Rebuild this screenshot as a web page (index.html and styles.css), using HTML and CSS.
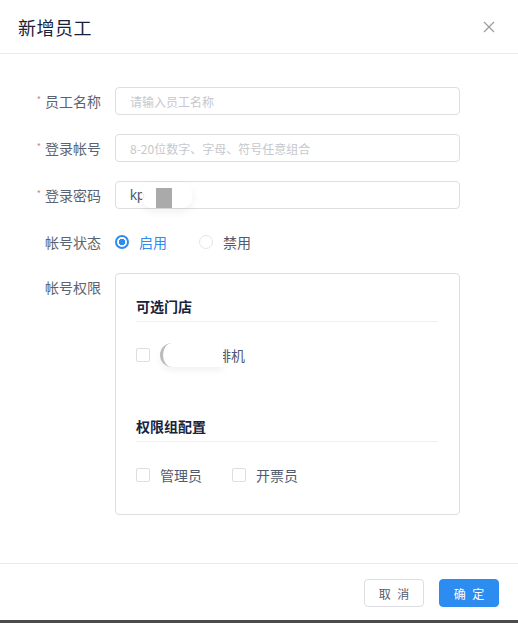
FILE: index.html
```html
<!DOCTYPE html>
<html lang="zh-CN">
<head>
    <meta charset="UTF-8">
    <meta name="viewport" content="width=device-width, initial-scale=1.0">
    <title>新增员工</title>
    <link rel="stylesheet" href="styles.css">
</head>
<body>

<div class="modal">
    <div class="modal-header">
        <span class="modal-title">新增员工</span>
        <svg class="modal-close" width="12" height="12" viewBox="0 0 12 12">
            <path d="M1 1L11 11M11 1L1 11" stroke="#999" stroke-width="1.1" fill="none"/>
        </svg>
    </div>

    <div class="modal-body">
        <div class="form-item">
            <label class="form-label required">员工名称</label>
            <input class="form-input" type="text" placeholder="请输入员工名称">
        </div>
        <div class="form-item">
            <label class="form-label required">登录帐号</label>
            <input class="form-input" type="text" placeholder="8-20位数字、字母、符号任意组合">
        </div>
        <div class="form-item">
            <label class="form-label required">登录密码</label>
            <div class="form-input fake-input">kp<span class="redact-pass"><span class="redact-block"></span></span></div>
        </div>
        <div class="form-item form-item-radio">
            <label class="form-label">帐号状态</label>
            <div class="radio-group">
                <span class="radio checked"><span class="radio-dot"></span>启用</span>
                <span class="radio"><span class="radio-dot"></span>禁用</span>
            </div>
        </div>
        <div class="form-item">
            <label class="form-label">帐号权限</label>
            <div class="perm-box">
                <div class="perm-section">
                    <div class="perm-title">可选门店</div>
                    <div class="check-row">
                        <span class="check"><span class="check-box"></span><span class="redact-store"></span>排机</span>
                    </div>
                </div>
                <div class="perm-section">
                    <div class="perm-title">权限组配置</div>
                    <div class="check-row">
                        <span class="check"><span class="check-box"></span>管理员</span>
                        <span class="check"><span class="check-box"></span>开票员</span>
                    </div>
                </div>
            </div>
        </div>
    </div>

    <div class="modal-footer">
        <button class="btn">取 消</button>
        <button class="btn btn-primary">确 定</button>
    </div>
</div>

</body>
</html>
```

FILE: styles.css
```css
body { margin: 0; background: #fff; font-family: "Noto Sans CJK SC", "Liberation Sans", sans-serif; color: #515a6e; font-size: 14px; }
.modal { width: 518px; height: 620px; display: flex; flex-direction: column; border-bottom: 3px solid #4b4b4b; }

.modal-header { height: 53px; border-bottom: 1px solid #e8eaec; display: flex; align-items: center; justify-content: space-between; padding: 0 23px 0 18px; }
.modal-title { font-size: 18px; color: #17233d; letter-spacing: 0.5px; }
.modal-close { display: block; }

.modal-body { flex: 1; padding-top: 33px; }
.form-item { display: flex; align-items: flex-start; margin-bottom: 19px; }
.form-item-radio { margin-bottom: 17px; }
.form-label { width: 101px; height: 28px; padding-right: 14px; text-align: right; line-height: 28px; font-size: 14px; color: #5c6370; flex-shrink: 0; }
.required::before { content: "*"; color: #c98a84; font-size: 9px; margin-right: 4px; position: relative; top: -4px; }

.form-input { width: 345px; height: 28px; box-sizing: border-box; border: 1px solid #dcdee2; border-radius: 4px; padding: 0 14px; font-family: inherit; font-size: 12px; color: #515a6e; outline: none; }
.form-input::placeholder { color: #c5c8ce; }
.fake-input { display: flex; align-items: center; font-size: 14px; color: #515a6e; font-family: "Liberation Sans", sans-serif; }
.redact-pass { display: inline-block; width: 50px; height: 26px; margin-left: -3px; background: rgba(255,255,255,0.9); box-shadow: 0 4px 10px rgba(0,0,0,0.06); border-radius: 10px; position: relative; }
.redact-block { position: absolute; left: 14px; top: 6px; width: 16px; height: 20px; background: #aaa; }

.radio-group { display: flex; align-items: center; height: 28px; }
.radio { display: flex; align-items: center; margin-right: 32px; color: #515a6e; }
.radio-dot { width: 12px; height: 12px; border: 1px solid #e3e5e8; border-radius: 50%; margin-right: 10px; }
.radio.checked { color: #2d8cf0; }
.radio.checked .radio-dot { background: radial-gradient(circle, #2d8cf0 3px, #fff 3.5px); border: 2px solid #2d8cf0; width: 10px; height: 10px; }

.perm-box { width: 345px; height: 242px; box-sizing: border-box; border: 1px solid #dcdee2; border-radius: 4px; padding: 22px 21px 0 20px; }
.perm-section + .perm-section { margin-top: 51px; }
.perm-title { font-weight: bold; color: #17233d; font-size: 14px; line-height: 20px; padding-bottom: 5px; border-bottom: 1px solid #eef0f3; }
.check-row { display: flex; align-items: center; margin-top: 23px; height: 20px; }
.check { display: flex; align-items: center; margin-right: 30px; color: #515a6e; }
.check-box { width: 12px; height: 12px; border: 1px solid #dcdee2; border-radius: 2px; margin-right: 10px; }
.redact-store { display: inline-block; width: 60px; height: 24px; margin-right: -6px; border-left: 3px solid #bbb; border-radius: 12px 0 0 12px; background: #fff; box-shadow: 0 4px 6px rgba(0,0,0,0.05); position: relative; }

.modal-footer { height: 57px; border-top: 1px solid #e8eaec; display: flex; justify-content: flex-end; align-items: flex-start; padding: 15px 19px 0 0; box-sizing: border-box; }
.btn { width: 60px; height: 28px; border: 1px solid #dcdee2; border-radius: 4px; background: #fff; color: #515a6e; font-family: inherit; font-size: 12px; letter-spacing: 2px; margin-left: 15px; padding: 0 0 0 2px; }
.btn-primary { background: #2d8cf0; border-color: #2d8cf0; color: #fff; }
```
